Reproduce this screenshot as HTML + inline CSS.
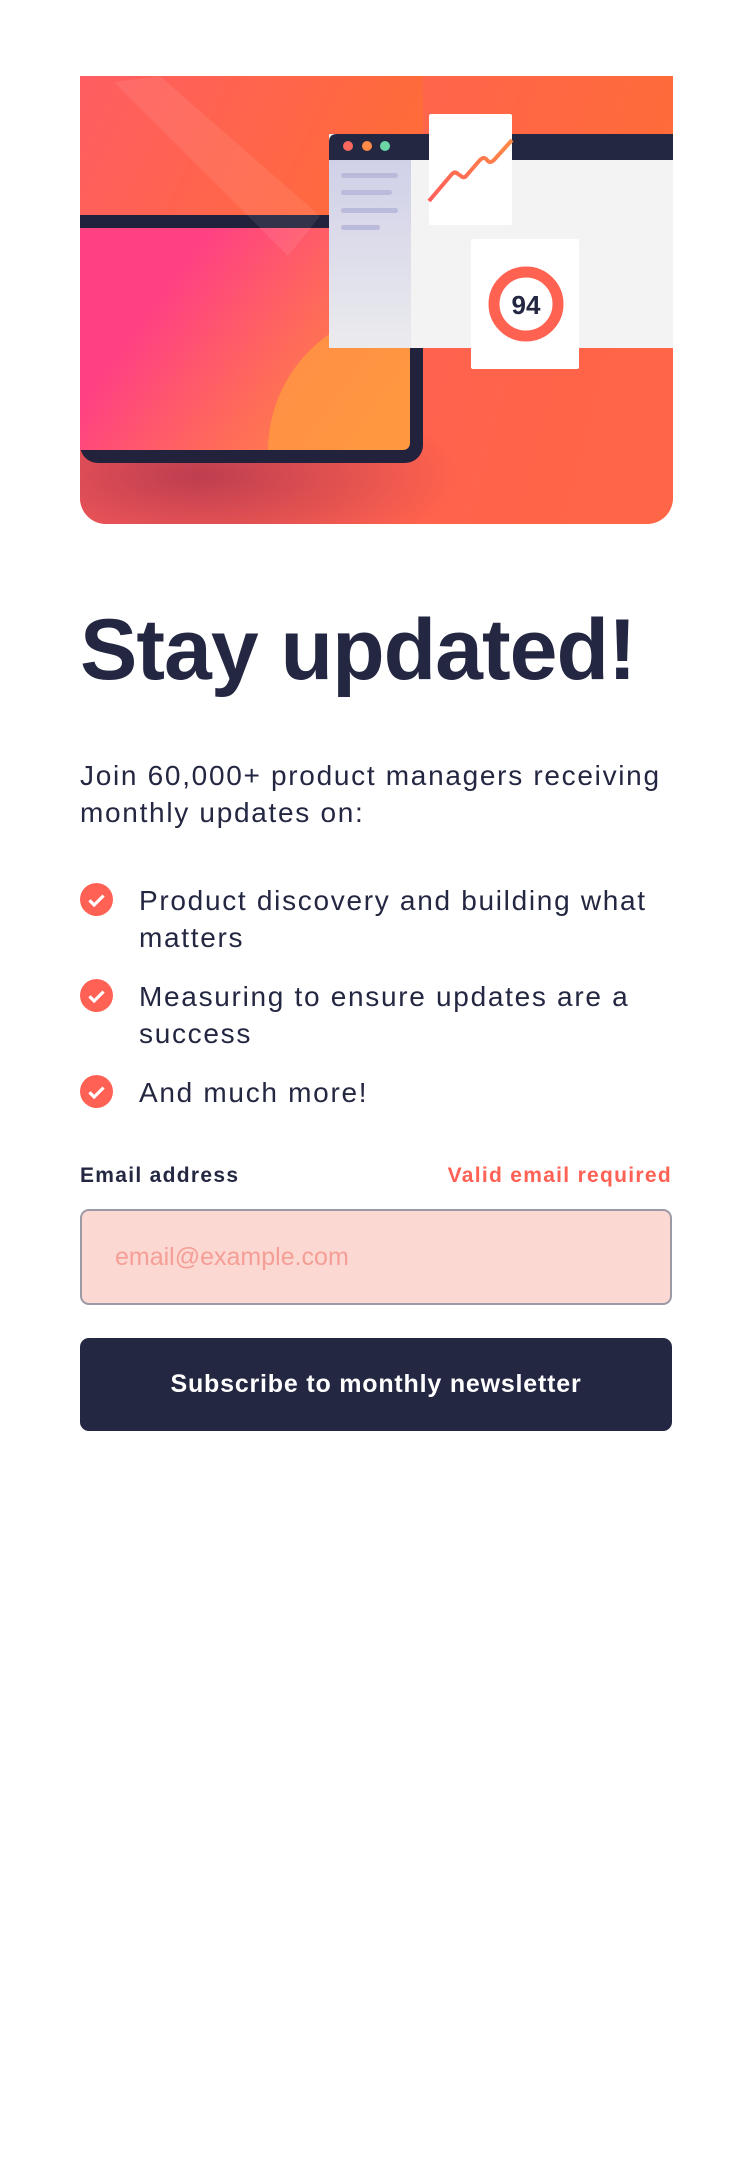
<!DOCTYPE html>
<html><head><meta charset="utf-8">
<style>
*{margin:0;padding:0;box-sizing:border-box}
body{width:750px;height:2160px;background:#fff;font-family:"Liberation Sans",Arial,sans-serif;color:#242742;position:relative}
.ill{position:absolute;left:80px;top:76px;width:593px;height:448px;border-radius:0 0 26px 26px;overflow:hidden}
h1{position:absolute;left:80px;top:600px;font-size:86px;font-weight:700;letter-spacing:-1px;line-height:100px;color:#242742;white-space:nowrap}
.intro{position:absolute;left:80px;top:757px;width:680px;font-size:28px;letter-spacing:1.7px;line-height:37px;white-space:nowrap}
ul{position:absolute;left:80px;top:882px;list-style:none;width:680px}
li{position:relative;padding-left:59px;font-size:28px;letter-spacing:1.7px;line-height:37px;margin-bottom:22px;white-space:nowrap}
li svg{position:absolute;left:0;top:1px}
.lab{position:absolute;top:1164px;font-size:21px;font-weight:700;letter-spacing:1.3px;white-space:nowrap}
.inp{position:absolute;left:80px;top:1209px;width:592px;height:96px;border:2px solid #9b9aa6;border-radius:9px;background:#fcd8d3;color:#f59e96;font-size:25px;padding-left:33px;line-height:92px}
.btn{position:absolute;left:80px;top:1338px;width:592px;height:93px;border-radius:9px;background:#242742;color:#fff;font-size:25px;font-weight:700;letter-spacing:0.8px;text-align:center;line-height:93px}
</style></head><body>
<div class="ill">
<svg width="593" height="448" viewBox="0 0 593 448">
<defs>
<linearGradient id="bg" x1="0" y1="0" x2="1" y2="0.2"><stop offset="0" stop-color="#ff5d62"/><stop offset="1" stop-color="#ff6b39"/></linearGradient>
<linearGradient id="scr" x1="0" y1="0.3" x2="1" y2="0.8"><stop offset="0.2" stop-color="#ff4183"/><stop offset="0.6" stop-color="#ff6a5a"/><stop offset="1" stop-color="#ff8c40"/></linearGradient>
<radialGradient id="sh" cx="0.4" cy="0.5" r="0.5"><stop offset="0" stop-color="#a8324e" stop-opacity="0.75"/><stop offset="1" stop-color="#a8324e" stop-opacity="0"/></radialGradient>
<linearGradient id="side" x1="0" y1="0" x2="0" y2="1"><stop offset="0" stop-color="#d0d0e8"/><stop offset="1" stop-color="#ebebee"/></linearGradient>
<linearGradient id="ln" x1="0" y1="1" x2="1" y2="0"><stop offset="0" stop-color="#ff5d5d"/><stop offset="1" stop-color="#ff8a45"/></linearGradient>
</defs>
<rect width="593" height="448" fill="url(#bg)"/>
<rect x="0" y="250" width="593" height="198" fill="#ff5d5d" opacity="0.4"/>
<ellipse cx="170" cy="400" rx="260" ry="90" fill="url(#sh)"/>
<rect x="0" y="139" width="343" height="248" rx="18" fill="#22223c"/>
<rect x="0" y="0" width="343" height="139" fill="url(#bg)"/>
<rect x="0" y="139" width="260" height="13" fill="#22223c"/>
<path d="M0 152 H330 V366 Q330 374 322 374 H0 Z" fill="url(#scr)"/>
<clipPath id="c"><path d="M0 152 H330 V366 Q330 374 322 374 H0 Z"/></clipPath>
<circle cx="330" cy="375" r="142" fill="#ff9a40" opacity="0.8" clip-path="url(#c)"/>
<polygon points="34,6 208,180 240,140 80,0" fill="#ffffff" opacity="0.08"/>
<path d="M249 58 H593 V272 H257 Q249 272 249 264 Z" fill="#f3f3f3"/>
<path d="M249 66 Q249 58 257 58 H593 V84 H249 Z" fill="#242742"/>
<rect x="249" y="84" width="82" height="188" fill="url(#side)"/>
<circle cx="268" cy="70" r="5" fill="#f8685e"/><circle cx="287" cy="70" r="5" fill="#fe8a46"/><circle cx="305" cy="70" r="5" fill="#6bd5a5"/>
<rect x="261" y="97" width="57" height="5" rx="2.5" fill="#babadb"/>
<rect x="261" y="114" width="51" height="5" rx="2.5" fill="#babadb"/>
<rect x="261" y="132" width="57" height="5" rx="2.5" fill="#babadb"/>
<rect x="261" y="149" width="39" height="5" rx="2.5" fill="#babadb"/>
<rect x="349" y="38" width="83" height="111" rx="2" fill="#fff"/>
<path d="M349 125 L372 98 Q375 95 378 98 L381 100 Q384 103 387 99 L400 84 Q404 80 407 84 Q410 88 414 84 L432 64" stroke="url(#ln)" stroke-width="4" fill="none"/>
<rect x="391" y="163" width="108" height="130" rx="2" fill="#fff"/>
<circle cx="446" cy="228" r="32" fill="none" stroke="#ff6251" stroke-width="11"/>
<text x="446" y="238" text-anchor="middle" font-family="Liberation Sans" font-weight="700" font-size="26" fill="#242742">94</text>
</svg>
</div>
<h1>Stay updated!</h1>
<div class="intro">Join 60,000+ product managers receiving<br>monthly updates on:</div>
<ul>
<li><svg width="33" height="33" viewBox="0 0 21 21"><circle cx="10.5" cy="10.5" r="10.5" fill="#ff6155"/><path d="M6 11l3 3 6-6" stroke="#fff" stroke-width="2" fill="none"/></svg>Product discovery and building what<br>matters</li>
<li><svg width="33" height="33" viewBox="0 0 21 21"><circle cx="10.5" cy="10.5" r="10.5" fill="#ff6155"/><path d="M6 11l3 3 6-6" stroke="#fff" stroke-width="2" fill="none"/></svg>Measuring to ensure updates are a<br>success</li>
<li><svg width="33" height="33" viewBox="0 0 21 21"><circle cx="10.5" cy="10.5" r="10.5" fill="#ff6155"/><path d="M6 11l3 3 6-6" stroke="#fff" stroke-width="2" fill="none"/></svg>And much more!</li>
</ul>
<div class="lab" style="left:80px">Email address</div>
<div class="lab" style="right:78px;color:#ff6155">Valid email required</div>
<div class="inp">email@example.com</div>
<div class="btn">Subscribe to monthly newsletter</div>
</body></html>
